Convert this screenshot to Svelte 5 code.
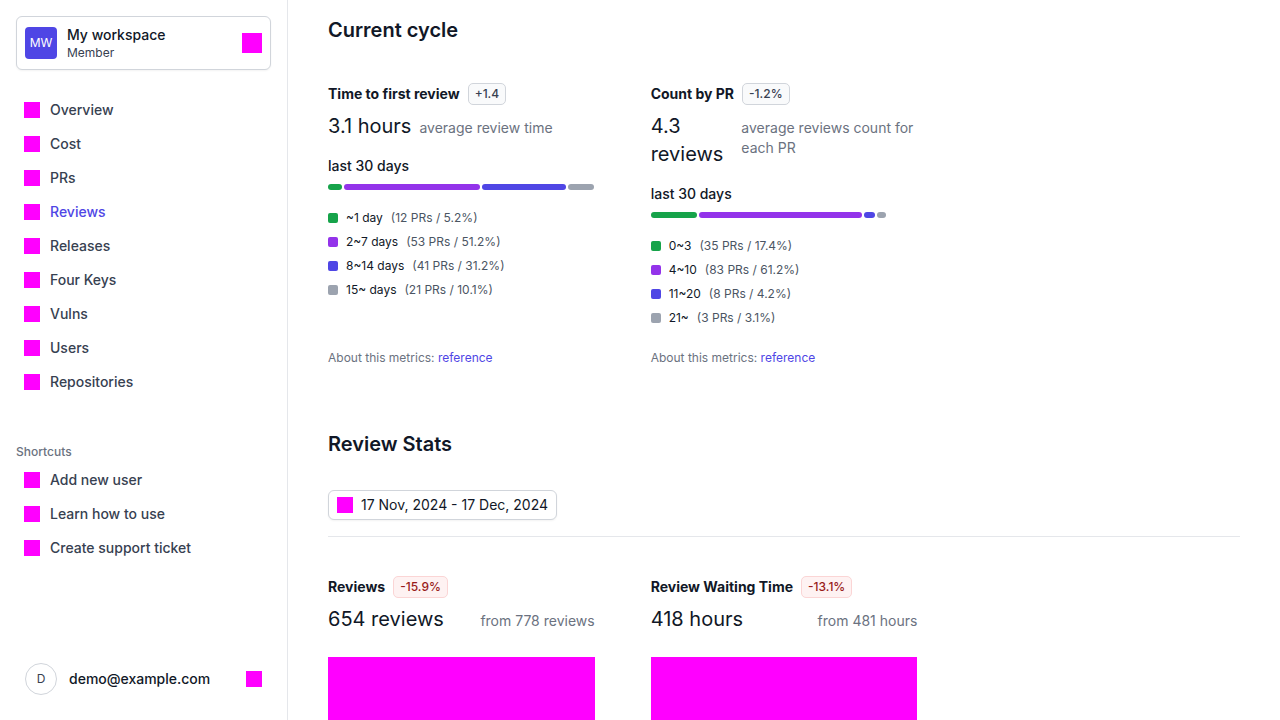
<script>
  const nav = ['Overview', 'Cost', 'PRs', 'Reviews', 'Releases', 'Four Keys', 'Vulns', 'Users', 'Repositories'];
  const shortcuts = ['Add new user', 'Learn how to use', 'Create support ticket'];
  const current = 'Reviews';

  const cycle = [
    {
      title: 'Time to first review',
      change: '+1.4',
      value: '3.1 hours',
      note: 'average review time',
      items: [
        { label: '~1 day', prs: 12, percent: 5.2, color: 'green' },
        { label: '2~7 days', prs: 53, percent: 51.2, color: 'purple' },
        { label: '8~14 days', prs: 41, percent: 31.2, color: 'indigo' },
        { label: '15~ days', prs: 21, percent: 10.1, color: 'gray' }
      ]
    },
    {
      title: 'Count by PR',
      change: '-1.2%',
      value: '4.3 reviews',
      note: 'average reviews count for each PR',
      items: [
        { label: '0~3', prs: 35, percent: 17.4, color: 'green' },
        { label: '4~10', prs: 83, percent: 61.2, color: 'purple' },
        { label: '11~20', prs: 8, percent: 4.2, color: 'indigo' },
        { label: '21~', prs: 3, percent: 3.1, color: 'gray' }
      ]
    }
  ];

  const stats = [
    { title: 'Reviews', change: '-15.9%', value: '654 reviews', from: 'from 778 reviews' },
    { title: 'Review Waiting Time', change: '-13.1%', value: '418 hours', from: 'from 481 hours' }
  ];
</script>

{#snippet links(items)}
  <ul class="links">
    {#each items as item}
      <li>
        <a href="#{item}" class:active={item === current} aria-current={item === current ? 'page' : undefined}>
          <span class="block small"></span>{item}
        </a>
      </li>
    {/each}
  </ul>
{/snippet}

<div class="layout">
  <aside>
    <button class="workspace" type="button">
      <span class="logo">MW</span>
      <span class="names">
        <span class="name">My workspace</span>
        <span class="role">Member</span>
      </span>
      <span class="block medium"></span>
    </button>
    <nav>
      {@render links(nav)}
      <h3>Shortcuts</h3>
      {@render links(shortcuts)}
    </nav>
    <button class="user" type="button">
      <span class="avatar">D</span>
      <span class="email">demo@example.com</span>
      <span class="block small"></span>
    </button>
  </aside>

  <main>
    <section>
      <h1>Current cycle</h1>
      <div class="grid">
        {#each cycle as card}
          <article>
            <div class="title">
              <h2>{card.title}</h2>
              <span class="badge">{card.change}</span>
            </div>
            <div class="figure">
              <span class="value">{card.value}</span>
              <span class="note">{card.note}</span>
            </div>
            <p class="period">last 30 days</p>
            <div class="bar">
              {#each card.items as item}
                <div class={item.color} style="width: {item.percent}%"></div>
              {/each}
            </div>
            <ul class="legend">
              {#each card.items as item}
                <li>
                  <span class="swatch {item.color}"></span>
                  <span>{item.label}</span>
                  <span class="share">({item.prs} PRs / {item.percent}%)</span>
                </li>
              {/each}
            </ul>
            <p class="about">About this metrics: <a href="#reference">reference</a></p>
          </article>
        {/each}
      </div>
    </section>

    <section>
      <h1>Review Stats</h1>
      <div class="filter">
        <button class="dates" type="button">
          <span class="block small"></span>17 Nov, 2024 - 17 Dec, 2024
        </button>
      </div>
      <div class="grid">
        {#each stats as card}
          <article>
            <div class="title">
              <h2>{card.title}</h2>
              <span class="badge negative">{card.change}</span>
            </div>
            <div class="figure spread">
              <span class="value">{card.value}</span>
              <span class="note">{card.from}</span>
            </div>
            <div class="chart"></div>
          </article>
        {/each}
      </div>
    </section>
  </main>
</div>

<style>
  :global(body) {
    margin: 0;
    background: #fff;
  }
  .layout,
  .layout * {
    box-sizing: border-box;
  }
  .layout {
    display: flex;
    height: 100vh;
    font-family: Inter, sans-serif;
    font-size: 14px;
    line-height: 20px;
    color: #111827;
    -webkit-font-smoothing: antialiased;
  }
  h1, h2, h3, p, ul {
    margin: 0;
    padding: 0;
  }
  ul {
    list-style: none;
  }
  a {
    text-decoration: none;
  }
  button {
    font: inherit;
    color: inherit;
    background: #fff;
    text-align: left;
    cursor: pointer;
  }
  .block {
    flex: none;
    background: #f0f;
  }
  .small {
    width: 16px;
    height: 16px;
  }
  .medium {
    width: 20px;
    height: 20px;
  }

  aside {
    flex: none;
    display: flex;
    flex-direction: column;
    width: 288px;
    padding: 16px;
    border-right: 1px solid #e5e7eb;
  }
  .workspace,
  .user {
    display: flex;
    align-items: center;
    padding: 8px;
    border: 1px solid #d1d5db;
    border-radius: 6px;
  }
  .workspace {
    gap: 10px;
    box-shadow: 0 1px 2px rgb(0 0 0 / 0.05);
  }
  .user {
    gap: 12px;
    border-color: transparent;
  }
  .logo,
  .avatar {
    flex: none;
    display: flex;
    align-items: center;
    justify-content: center;
    width: 32px;
    height: 32px;
    font-size: 12px;
    line-height: 16px;
  }
  .logo {
    border-radius: 4px;
    background: #4f46e5;
    color: #fff;
  }
  .avatar {
    border: 1px solid #d1d5db;
    border-radius: 50%;
    color: #374151;
  }
  .names {
    flex: 1;
    display: flex;
    flex-direction: column;
  }
  .name,
  .email {
    font-weight: 500;
  }
  .email {
    flex: 1;
  }
  .role {
    font-size: 12px;
    line-height: 16px;
    color: #374151;
  }
  nav {
    flex: 1;
    padding-top: 24px;
  }
  .links {
    display: grid;
    gap: 2px;
  }
  .links a {
    display: flex;
    align-items: center;
    gap: 10px;
    padding: 6px 8px;
    font-weight: 500;
    color: #374151;
  }
  .links a.active {
    color: #4f46e5;
  }
  h3 {
    margin: 46px 0 4px;
    font-size: 12px;
    line-height: 16px;
    font-weight: 500;
    color: #6b7280;
  }

  main {
    flex: 1;
    min-width: 0;
    padding: 16px 40px;
    overflow-y: auto;
    scrollbar-width: none;
  }
  section + section {
    margin-top: 64px;
  }
  h1 {
    font-size: 20px;
    line-height: 28px;
    font-weight: 600;
  }
  .grid {
    display: grid;
    grid-template-columns: repeat(3, minmax(0, 1fr));
    gap: 56px;
    margin-top: 38px;
  }
  article {
    display: flex;
    flex-direction: column;
  }
  .title {
    display: flex;
    align-items: center;
    gap: 8px;
    height: 24px;
    margin-bottom: 6px;
  }
  h2 {
    font-size: 14px;
    line-height: 20px;
    font-weight: 700;
  }
  .badge {
    padding: 2px 6px;
    border: 1px solid #d1d5db;
    border-radius: 5px;
    background: #f9fafb;
    font-size: 12px;
    line-height: 16px;
    font-weight: 500;
    color: #374151;
  }
  .negative {
    border-color: #fbd5d5;
    background: #fef2f2;
    color: #991b1b;
  }
  .figure {
    display: flex;
    align-items: baseline;
    gap: 8px;
  }
  .spread {
    justify-content: space-between;
  }
  .value {
    font-size: 20px;
    line-height: 28px;
  }
  .note {
    color: #6b7280;
  }
  .period {
    margin-top: 16px;
    font-weight: 500;
  }
  .bar {
    display: flex;
    gap: 2px;
    margin-top: 8px;
  }
  .bar div {
    height: 6px;
    border-radius: 3px;
  }
  .green {
    background: #16a34a;
  }
  .purple {
    background: #9333ea;
  }
  .indigo {
    background: #4f46e5;
  }
  .gray {
    background: #9ca3af;
  }
  .legend {
    display: grid;
    gap: 8px;
    margin: 20px 0 24px;
    font-size: 12px;
    line-height: 16px;
  }
  .legend li {
    display: flex;
    align-items: center;
    gap: 8px;
  }
  .swatch {
    width: 10px;
    height: 10px;
    border-radius: 2px;
  }
  .share {
    color: #4b5563;
  }
  .about {
    margin-top: auto;
    font-size: 12px;
    line-height: 16px;
    color: #6b7280;
  }
  .about a {
    color: #4f46e5;
  }
  .filter {
    display: flex;
    margin-top: 32px;
    padding-bottom: 16px;
    border-bottom: 1px solid #e5e7eb;
  }
  .dates {
    display: flex;
    align-items: center;
    gap: 8px;
    padding: 4px 8px;
    border: 1px solid #d1d5db;
    border-radius: 6px;
    box-shadow: 0 1px 2px rgb(0 0 0 / 0.05);
  }
  .chart {
    height: 160px;
    margin-top: 24px;
    background: #f0f;
  }
</style>
